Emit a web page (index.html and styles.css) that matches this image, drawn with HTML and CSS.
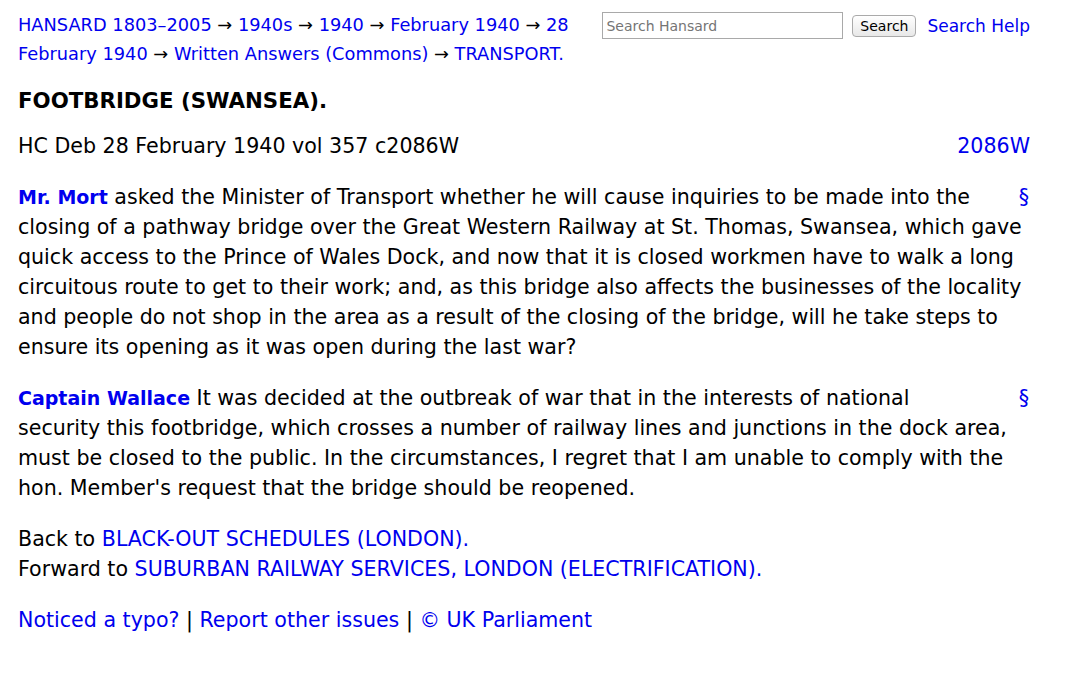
FILE: index.html
```html
<!DOCTYPE html>
<html>
<head>
<meta charset="utf-8">
<title>FOOTBRIDGE (SWANSEA).</title>
<link rel="stylesheet" href="styles.css">
</head>
<body>
<div class="page">
  <div class="header">
    <div class="crumbs"><a href="#">HANSARD 1803–2005</a> → <a href="#">1940s</a> → <a href="#">1940</a> → <a href="#">February 1940</a> → <a href="#">28 February 1940</a> → <a href="#">Written Answers (Commons)</a> → <a href="#">TRANSPORT.</a></div>
    <form class="search">
      <input class="search-input" type="text" placeholder="Search Hansard">
      <button class="search-btn" type="button">Search</button>
      <a class="help" href="#">Search Help</a>
    </form>
  </div>
  <h1 class="title">FOOTBRIDGE (SWANSEA).</h1>
  <div class="citation"><span>HC Deb 28 February 1940 vol 357 c2086W</span><a href="#">2086W</a></div>
  <p class="speech first"><a class="sect" href="#">§</a><a class="member" href="#">Mr. Mort</a> asked the Minister of Transport whether he will cause inquiries to be made into the closing of a pathway bridge over the Great Western Railway at St. Thomas, Swansea, which gave quick access to the Prince of Wales Dock, and now that it is closed workmen have to walk a long circuitous route to get to their work; and, as this bridge also affects the businesses of the locality and people do not shop in the area as a result of the closing of the bridge, will he take steps to ensure its opening as it was open during the last war?</p>
  <p class="speech"><a class="sect" href="#">§</a><a class="member" href="#">Captain Wallace</a> It was decided at the outbreak of war that in the interests of national security this footbridge, which crosses a number of railway lines and junctions in the dock area, must be closed to the public. In the circumstances, I regret that I am unable to comply with the hon. Member's request that the bridge should be reopened.</p>
  <p class="nav">Back to <a href="#">BLACK-OUT SCHEDULES (LONDON).</a><br>Forward to <a href="#">SUBURBAN RAILWAY SERVICES, LONDON (ELECTRIFICATION).</a></p>
  <p class="footer"><a href="#">Noticed a typo?</a> | <a href="#">Report other issues</a> | <a href="#">© UK Parliament</a></p>
</div>
</body>
</html>
```

FILE: styles.css
```css
html, body {
  margin: 0;
  padding: 0;
  background: #fff;
}
body {
  font-family: "DejaVu Sans", "Liberation Sans", sans-serif;
  color: #000;
}
a {
  color: #0000ee;
  text-decoration: none;
}
.page {
  padding: 10px 41px 20px 18px;
}
.header {
  display: flex;
  justify-content: space-between;
  align-items: flex-start;
}
.crumbs {
  width: 575px;
  font-size: 17.8px;
  line-height: 29px;
}
.search {
  display: flex;
  align-items: center;
  margin-top: 2px;
}
.search-input {
  width: 233px;
  height: 23px;
  border: 1px solid #a9a9a9;
  padding: 1px 3px;
  font-family: "DejaVu Sans", sans-serif;
  font-size: 14px;
  color: #555;
  margin: 0;
}
.search-input::placeholder {
  color: #757575;
}
.search-btn {
  margin-left: 9px;
  height: 22px;
  width: 64px;
  padding: 0;
  font-family: "DejaVu Sans", sans-serif;
  font-size: 14px;
  color: #000;
  background: linear-gradient(#fff, #e8e8e8);
  border: 1px solid #aaa;
  border-radius: 4px;
}
.help {
  margin-left: 11px;
  font-size: 17px;
}
.title {
  font-size: 21.3px;
  font-weight: bold;
  margin: 20px 0 0 0;
  line-height: 26px;
}
.citation {
  display: flex;
  justify-content: space-between;
  font-size: 20.6px;
  line-height: 28px;
  margin-top: 18px;
}
.speech, .nav, .footer {
  font-size: 20.6px;
  line-height: 30px;
  margin: 21px 0 0 0;
}
.speech.first {
  margin-top: 22px;
}
.member {
  font-weight: bold;
  font-size: 19px;
  line-height: 20px;
}
.sect {
  float: right;
  margin-left: 40px;
  margin-right: 1px;
}
```
